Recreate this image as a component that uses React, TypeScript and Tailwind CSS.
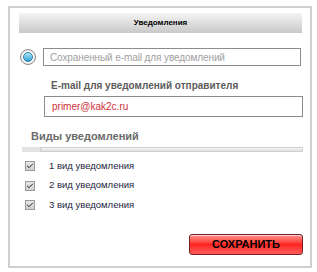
import { Check } from 'lucide-react';

const types = ['1 вид уведомления', '2 вид уведомления', '3 вид уведомления'];

export default function App() {
  return (
    <div className="w-[317px] h-[272px] bg-white pt-[6px] pl-[8px] font-['Liberation_Sans',Arial,sans-serif]">
      <div className="w-[304px] h-[262px] border-2 border-[#cfcfcf] pt-[5px] pl-[9px] flex flex-col">
        <div className="w-[283px] h-[20px] bg-gradient-to-b from-[#f4f4f4] to-[#c9c9c9] flex items-center justify-center">
          <span className="text-[8px] font-bold text-black">Уведомления</span>
        </div>

        <div className="flex items-center mt-[15px] ml-[1px]">
          <div className="w-[16px] h-[16px] rounded-full border border-[#8a8a8a] bg-white flex items-center justify-center shadow-[inset_0_0_0_1px_#e6e6e6]">
            <div className="w-[10px] h-[10px] rounded-full bg-gradient-to-b from-[#a8e8f8] to-[#2aa3d6] border border-[#2b7ea8]" />
          </div>
          <div className="ml-[7px] w-[258px] h-[18px] border border-[#8c8c8c] flex items-center pl-[6px]">
            <span className="text-[10px] text-[#a0a0a0] tracking-[-0.1px]">Сохраненный e-mail для уведомлений</span>
          </div>
        </div>

        <div className="ml-[32px] mt-[12px] text-[10px] font-bold text-[#5c5c5c]">E-mail для уведомлений отправителя</div>
        <div className="ml-[25px] mt-[3px] w-[259px] h-[21px] border border-[#8c8c8c] flex items-center pl-[7px]">
          <span className="text-[10px] text-[#d0303a]">primer@kak2c.ru</span>
        </div>

        <div className="ml-[12px] mt-[11px] text-[11px] font-bold text-[#6a6a6a]">Виды уведомлений</div>
        <div className="ml-[3px] mt-[2px] w-[281px] h-[5px] flex">
          <div className="w-[18px] h-full bg-[#e3e3e3]" />
          <div className="flex-1 h-full border border-[#cfcfcf] bg-gradient-to-b from-[#f5f5f5] to-[#dedede]" />
        </div>

        <div className="mt-[9px] flex flex-col gap-[8.5px]">
          {types.map((t) => (
            <div key={t} className="flex items-center h-[11px]">
              <div className="ml-[6px] w-[10px] h-[10px] border border-[#9a9a9a] bg-gradient-to-b from-[#e8e8e8] to-[#cfcfcf] flex items-center justify-center">
                <Check className="w-[8px] h-[8px] text-[#222]" strokeWidth={3} />
              </div>
              <span className="ml-[14px] text-[9.5px] text-[#1c2540]">{t}</span>
            </div>
          ))}
        </div>

        <div className="flex-1" />
        <div className="mb-[11px] ml-[170px] w-[114px] h-[21px] rounded-[3px] border border-[#7a2020] bg-gradient-to-b from-[#ff8a8a] via-[#ff2020] to-[#ff5a5a] flex items-center justify-center shadow-[inset_0_1px_0_#ffd0d0]">
          <span className="text-[11px] font-bold text-black">СОХРАНИТЬ</span>
        </div>
      </div>
    </div>
  );
}
